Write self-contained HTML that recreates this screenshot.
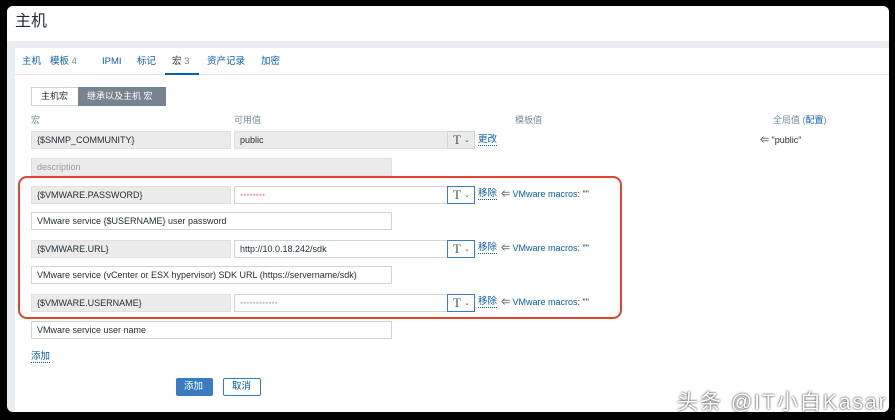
<!DOCTYPE html>
<html><head><meta charset="utf-8"><style>
*{box-sizing:border-box;margin:0;padding:0}
body{width:895px;height:420px;background:#000;font-family:"Liberation Sans","Noto Sans CJK SC",sans-serif;font-size:9.5px;color:#1f2c33;position:relative;overflow:hidden;line-height:1.2}
.win{position:absolute;left:7px;top:6px;width:882px;height:406px;background:#ebeef0;border-radius:6px;overflow:hidden}
.title{position:absolute;left:0;top:0;width:100%;height:35px;background:#fff;font-size:16px;line-height:20px;padding:6px 0 0 8px;color:#1f2c33}
.panel{position:absolute;left:8px;top:42px;width:874px;height:364px;background:#fff}
.c{position:absolute;left:0;top:-6px;width:100%;height:100%}
.a{position:absolute}
.tabs{position:absolute;left:0;top:0;width:100%;height:27px;border-bottom:1px solid #dfe4e7}
.tab{position:absolute;top:8px;color:#0b5ea8;font-size:9.5px;line-height:12px}
.inp{position:absolute;height:18px;border:1px solid #cfd4d7;padding:0 5px;line-height:16px;font-size:9px;white-space:nowrap;overflow:hidden}
.g{background:#ebebeb;border-color:#e0e0e0}
.tb{position:absolute;width:28px;height:18px;border:1px solid #3b7bc0;font-family:"Liberation Serif",serif;font-size:13px;color:#555;padding:0 0 0 5px;line-height:16px}
.tb span{font-family:"Liberation Sans";font-size:7px;position:absolute;right:4px;top:1px}
.lk{position:absolute;color:#0b5ea8;border-bottom:1px dotted #0b5ea8;font-size:9.5px;line-height:11px}
.lbl{position:absolute;color:#768d99;font-size:9px;line-height:11px}
.vm{position:absolute;font-size:9px;line-height:11px}
.vm b{font-weight:normal;color:#0b5ea8}
</style></head><body>
<div class="win">
<div class="title">主机</div>
<div class="panel">
<div class="tabs">
<span class="tab" style="left:7px">主机</span>
<span class="tab" style="left:35px">模板 <span style="color:#768d99">4</span></span>
<span class="tab" style="left:87px">IPMI</span>
<span class="tab" style="left:122px">标记</span>
<span class="tab" style="left:157px;color:#1f2c33">宏 <span style="color:#768d99">3</span></span>
<span class="tab" style="left:192px">资产记录</span>
<span class="tab" style="left:246px">加密</span>
<div class="a" style="left:150px;top:25px;width:34px;height:2px;background:#0b5ea8"></div>
</div>
<div class="c">
<div class="a" style="left:16px;top:45px;width:48px;height:19px;border:1px solid #cfd4d7;padding:0 0 0 9px;line-height:17px;font-size:9px">主机宏</div>
<div class="a" style="left:63px;top:45px;width:88px;height:19px;background:#76848f;color:#fff;padding:0 0 0 9px;line-height:19px;font-size:9px">继承以及主机 宏</div>
<span class="lbl" style="left:16px;top:73px">宏</span>
<span class="lbl" style="left:219px;top:73px">可用值</span>
<span class="lbl" style="left:500px;top:73px">模板值</span>
<span class="lbl" style="left:758px;top:73px">全局值 (<span style="color:#0b5ea8">配置</span>)</span>
<div class="inp g" style="left:16px;top:89px;width:200px">{$SNMP_COMMUNITY}</div>
<div class="inp g" style="left:219px;top:89px;width:214px">public</div>
<div class="tb" style="left:432px;top:89px;background:#ebebeb;border-color:#cfd4d7">T<span>⌄</span></div>
<span class="lk" style="left:463px;top:92px">更改</span>
<span class="vm" style="left:745px;top:93px">⇐ "public"</span>
<div class="inp g" style="left:16px;top:116px;width:361px;color:#999">description</div>

<div class="inp g" style="left:16px;top:144px;width:200px">{$VMWARE.PASSWORD}</div>
<div class="inp" style="left:219px;top:144px;width:214px;color:#e8b0b0">••••••••</div>
<div class="tb" style="left:432px;top:144px">T<span>⌄</span></div>
<span class="lk" style="left:463px;top:146px">移除</span>
<span class="vm" style="left:486px;top:147px">⇐ <b>VMware macros</b>: ""</span>
<div class="inp" style="left:16px;top:170px;width:361px">VMware service {$USERNAME} user password</div>

<div class="inp g" style="left:16px;top:198px;width:200px">{$VMWARE.URL}</div>
<div class="inp" style="left:219px;top:198px;width:214px">http://10.0.18.242/sdk</div>
<div class="tb" style="left:432px;top:198px">T<span>⌄</span></div>
<span class="lk" style="left:463px;top:200px">移除</span>
<span class="vm" style="left:486px;top:201px">⇐ <b>VMware macros</b>: ""</span>
<div class="inp" style="left:16px;top:224px;width:361px">VMware service (vCenter or ESX hypervisor) SDK URL (https://servername/sdk)</div>

<div class="inp g" style="left:16px;top:252px;width:200px">{$VMWARE.USERNAME}</div>
<div class="inp" style="left:219px;top:252px;width:214px;color:#ccc">••••••••••••</div>
<div class="tb" style="left:432px;top:252px">T<span>⌄</span></div>
<span class="lk" style="left:463px;top:254px">移除</span>
<span class="vm" style="left:486px;top:255px">⇐ <b>VMware macros</b>: ""</span>
<div class="inp" style="left:16px;top:279px;width:361px">VMware service user name</div>

<span class="lk" style="left:16px;top:309px">添加</span>
<div class="a" style="left:161px;top:336px;width:37px;height:18px;background:#3b7bc0;color:#fff;padding:0 0 0 8px;line-height:18px;border-radius:2px">添加</div>
<div class="a" style="left:208px;top:336px;width:38px;height:18px;border:1px solid #3b7bc0;color:#0b5ea8;padding:0 0 0 8px;line-height:16px;border-radius:2px">取消</div>
</div>
</div>
</div>
<div class="a" style="left:18px;top:176px;width:604px;height:143px;border:2px solid #e0452f;border-radius:9px"></div>
<div class="a" style="left:677px;top:391px;color:#fff;font-size:21px;line-height:24px;letter-spacing:2px;white-space:nowrap;text-shadow:0 0 2px #000">头条 @IT小白Kasar</div>
</body></html>
